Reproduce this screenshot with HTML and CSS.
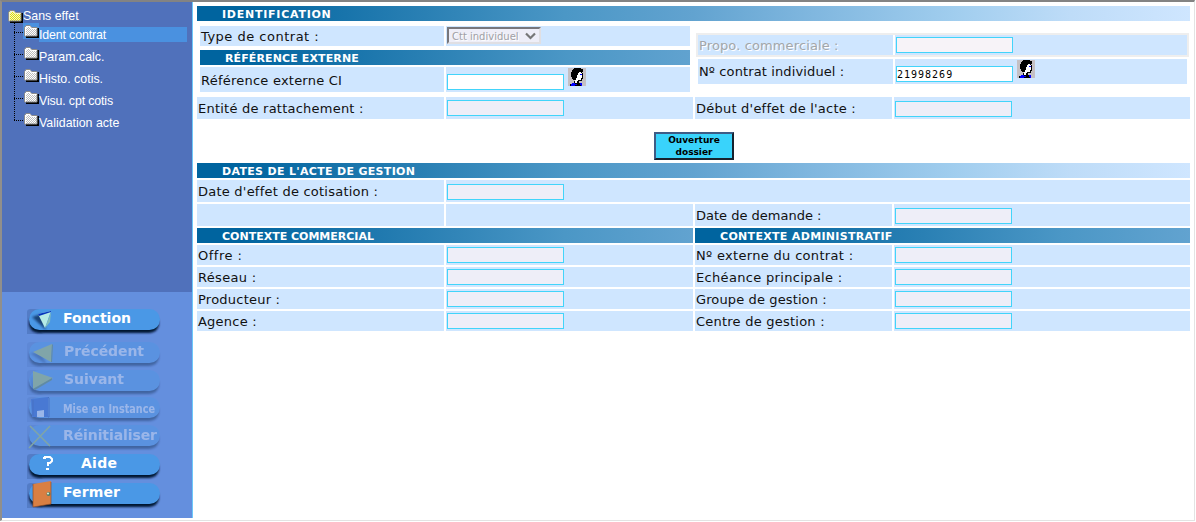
FILE: index.html
```html
<!DOCTYPE html>
<html lang="fr">
<head>
<meta charset="utf-8">
<title>Ident contrat</title>
<link rel="stylesheet" href="styles.css">
</head>
<body>
<svg class="defs" width="0" height="0">
  <defs>
    <pattern id="dots" width="2" height="2" patternUnits="userSpaceOnUse"><rect width="2" height="2" fill="#fff"/><rect width="1" height="1" fill="#bdbdbd"/><rect x="1" y="1" width="1" height="1" fill="#bdbdbd"/></pattern>
    <pattern id="ydots" width="2" height="2" patternUnits="userSpaceOnUse"><rect width="2" height="2" fill="#f2f2d0"/><rect width="1" height="1" fill="#e2e200"/><rect x="1" y="1" width="1" height="1" fill="#e2e200"/></pattern>
    <filter id="soft" x="-10%" y="-30%" width="120%" height="170%"><feGaussianBlur stdDeviation="1.3"/></filter>
    <symbol id="folder" viewBox="0 0 15 13"><path d="M2 12h12V3" fill="none" stroke="#000" stroke-width="2"/><path d="M.5 11V2.500L2 .5h4l1.500 2h5.500V11z" fill="url(#dots)" stroke="#8b8b8b"/><path d="M1.500 10.500V2.500h1l.5-1h3l1.500 2h5" fill="none" stroke="#fff"/></symbol>
    <symbol id="folder-open" viewBox="0 0 15 13"><path d="M2 12h12V3" fill="none" stroke="#000" stroke-width="2"/><path d="M.5 11V2.500L2 .5h4l1.500 2h5.500V11z" fill="url(#ydots)" stroke="#8b8b8b"/><path d="M1.500 10.500V2.500h1l.5-1h3l1.500 2h5" fill="none" stroke="#f4f4c8"/></symbol>
    <symbol id="pill" viewBox="0 0 136 28"><path d="M0 4Q0 1 4 1h10v22q0 3 4 3H0z" fill="#183a70" opacity=".22"/><rect x="2" y="6" width="130" height="19" rx="9.500" fill="#001433" filter="url(#soft)"/><rect x="2" y="1" width="131" height="21" rx="10.500" fill="#4a98e6"/></symbol>
    <symbol id="person" viewBox="0 0 18 18" shape-rendering="crispEdges"><path fill="#c4c0c4" d="M0 0h18v18H0z"/><path fill="#000" d="M6 0h7v1h2v3h-1v1h1v6h-1v2h-3v2h3v3H2v-2h2v-1h2v-2h1v-1H5v-1H4V9H3V4h1V2h1V1h1z"/><path fill="#fff" d="M11 4h2v1h1v5h-1v2h-3v1H9v2H7v-3h1v-2h1V7h1V5h1z"/><path fill="#00f" d="M3 16h1v-1h3v1h2v1H7v1H3zM12 15h2v3h-1v-1h-1zM12 6h2v1h-2z"/></symbol>
  </defs>
</svg>
<div class="frame">
  <nav class="side">
    <div class="tree">
      <div class="root"><svg width="15" height="13"><use href="#folder-open"/></svg><span class="t-root">Sans effet</span></div>
      <ul class="branch">
        <li class="on"><i></i><b><svg width="15" height="13"><use href="#folder"/></svg></b><span class="snug">Ident contrat</span></li>
        <li><i></i><b><svg width="15" height="13"><use href="#folder"/></svg></b><span>Param.calc.</span></li>
        <li><i></i><b><svg width="15" height="13"><use href="#folder"/></svg></b><span>Histo. cotis.</span></li>
        <li><i></i><b><svg width="15" height="13"><use href="#folder"/></svg></b><span class="snug">Visu. cpt cotis</span></li>
        <li><i></i><b><svg width="15" height="13"><use href="#folder"/></svg></b><span>Validation acte</span></li>
      </ul>
    </div>
    <div class="actions">
      <svg class="act a1" viewBox="0 0 136 28"><use href="#pill"/><path d="M5 9l14 13-5-16z" fill="#001840" opacity=".65" filter="url(#soft)"/><path d="M11 6l13-3-6 17z" fill="#b5ebe5"/><path d="M11 6l13-3v1L12 8z" fill="#0635bd"/><path d="M24 4l-1 10-5 6z" fill="#83beb9"/><text x="36" y="15" textLength="68">Fonction</text></svg>
      <svg class="act a2 off" viewBox="0 0 136 28"><use href="#pill"/><path d="M3 12l17 12-6-12z" fill="#001840" opacity=".6" filter="url(#soft)"/><path d="M6 11l19-8-1 18z" fill="#b4d04a"/><path d="M25 3l1 1-1 17h-1z" fill="#5e8535"/><text x="37" y="15" textLength="80">Précédent</text></svg>
      <svg class="act a3 off" viewBox="0 0 136 28"><use href="#pill"/><path d="M4 4l4 18-3 1z" fill="#001840" opacity=".6" filter="url(#soft)"/><path d="M6 2l20 7L6 20z" fill="#b4d04a"/><path d="M6 20l19-11v2L8 21z" fill="#5e8535"/><text x="37" y="15" textLength="60">Suivant</text></svg>
      <svg class="act a4 off" viewBox="0 0 136 28"><use href="#pill"/><path d="M4 3L21 1v20H5z" fill="#1a52bf"/><path d="M21 1l1 1v19h-1M6 4v16" fill="none" stroke="#123d94"/><path d="M10 15l7-1v7h-7z" fill="#fff"/><text x="36" y="17" font-size="12" textLength="92" lengthAdjust="spacingAndGlyphs">Mise en Instance</text></svg>
      <svg class="act a5 off" viewBox="0 0 136 28"><use href="#pill"/><path d="M3 2l20 20M23 2L2 24" fill="none" stroke="#b5cf3d" stroke-width="1.500"/><text x="36" y="16" textLength="94">Réinitialiser</text></svg>
      <svg class="act a6" viewBox="0 0 136 28"><use href="#pill"/><path d="M17 6V5h1V4h5l2 2v2l-2 2h-2v3" fill="none" stroke="#fff" stroke-width="2"/><path d="M19 15h3v2h-3z"/><text x="54" y="15" textLength="36">Aide</text></svg>
      <svg class="act a7" viewBox="0 0 136 28"><use href="#pill"/><path d="M6 2L24-1v23L6 25z" fill="#d97f43"/><path d="M6 2v23M6 25l18-3V0" fill="none" stroke="#8f4d29" stroke-width=".7"/><circle cx="21.500" cy="12" r="2" fill="#517d65"/><circle cx="21" cy="11.500" r="1" fill="#dff5df"/><text x="36" y="15" textLength="57">Fermer</text></svg>
    </div>
  </nav>
  <main class="main">
    <h2 class="bar ls-7">IDENTIFICATION</h2>
    <section class="ident">
      <div class="left">
        <div class="row two"><div class="lab ls-5">Type de contrat :</div><div class="fld"><div class="select"><span>Ctt individuel</span><svg width="11" height="8" viewBox="0 0 11 8"><path d="M1 1.500l4.500 4.500L10 1.500" fill="none" stroke="#777" stroke-width="2.200"/></svg></div></div></div>
        <h2 class="bar sub ls-1">RÉFÉRENCE EXTERNE</h2>
        <div class="row two tall"><div class="lab ls-2">Référence externe CI</div><div class="fld"><div class="inp live"></div><svg class="person" width="18" height="18"><use href="#person"/></svg></div></div>
      </div>
      <div class="right">
        <div class="disabled"><div class="row pair"><div class="lab dim ls-1">Propo. commerciale :</div><div class="fld"><div class="inp pink"></div></div></div></div>
        <div class="row pair tall"><div class="lab raised ls-1">Nº contrat individuel :</div><div class="fld"><div class="inp live">21998269</div><svg class="person" width="18" height="18"><use href="#person"/></svg></div></div>
      </div>
    </section>
    <div class="row four h22"><div class="lab ls-2">Entité de rattachement :</div><div class="fld mid"><div class="inp"></div></div><div class="lab ls-2">Début d'effet de l'acte :</div><div class="fld"><div class="inp"></div></div></div>
    <div class="openrow"><button class="open">Ouverture<br>dossier</button></div>
    <h2 class="bar ls-3">DATES DE L'ACTE DE GESTION</h2>
    <div class="row wide h22"><div class="lab ls-2">Date d'effet de cotisation :</div><div class="fld"><div class="inp"></div></div></div>
    <div class="row four h22"><div class="lab"></div><div class="fld"></div><div class="lab">Date de demande :</div><div class="fld"><div class="inp"></div></div></div>
    <div class="heads"><h2 class="bar">CONTEXTE COMMERCIAL</h2><h2 class="bar ls-3">CONTEXTE ADMINISTRATIF</h2></div>
    <div class="row four"><div class="lab ls-5">Offre :</div><div class="fld"><div class="inp"></div></div><div class="lab ls-3">Nº externe du contrat :</div><div class="fld"><div class="inp"></div></div></div>
    <div class="row four"><div class="lab ls-3">Réseau :</div><div class="fld"><div class="inp"></div></div><div class="lab ls-3">Echéance principale :</div><div class="fld"><div class="inp"></div></div></div>
    <div class="row four"><div class="lab ls-2">Producteur :</div><div class="fld"><div class="inp"></div></div><div class="lab ls-1">Groupe de gestion :</div><div class="fld"><div class="inp"></div></div></div>
    <div class="row four"><div class="lab ls-2">Agence :</div><div class="fld"><div class="inp"></div></div><div class="lab ls-2">Centre de gestion :</div><div class="fld"><div class="inp"></div></div></div>
  </main>
</div>
</body>
</html>
```
FILE: styles.css
```css
* { box-sizing: border-box; }
body { margin: 0; background: #fff; overflow: hidden; font-family: "DejaVu Sans", Verdana, sans-serif; }
.defs { display: block; height: 0; }
.frame {
  display: flex; width: 1195px; height: 521px;
  border-style: solid; border-width: 2px 1px 1px 2px; border-color: #838383 #e3e3e3 #e3e3e3 #918f8b;
}
.side { width: 191px; height: 516px; border-right: 1px solid #6cc8fa; display: flex; flex-direction: column; background: #648fde; }
.tree { height: 290px; background: #5071bb; padding: 6px 0 0 6px; color: #fff; font: 12.4px/15px "Liberation Sans", Arial, sans-serif; }
.root { display: flex; height: 15px; align-items: flex-end; }
.t-root { line-height: 14px; }
.tree svg { display: block; }
.branch { list-style: none; margin: 0 0 0 6px; padding: 0; }
.branch li { display: flex; height: 22px; align-items: flex-start; }
.branch i { width: 9px; height: 22px; background: repeating-linear-gradient(#000 0 1px, transparent 1px 2px) 0 0 / 1px 100% no-repeat, repeating-linear-gradient(90deg, #000 0 1px, transparent 1px 2px) 0 9px / 100% 1px no-repeat; }
.branch li:last-child i { height: 10px; }
.branch b { width: 16px; height: 16px; padding: 2px 0 0 1px; }
.branch span { width: 148px; height: 15px; margin-top: 4px; line-height: 17px; }
.branch .snug { letter-spacing: -.15px; }
.branch .on b, .branch .on span { background: #4a91e0; }
.actions { display: flex; flex-direction: column; padding: 16px 0 0 25px; }
.act { width: 136px; height: 28px; display: block; overflow: visible; flex: none; fill: #fff; font: bold 14px "DejaVu Sans", Verdana, sans-serif; }
.off { opacity: .35; }
.a2 { margin-top: 5px; }
.a4 { margin-top: -1px; }
.a6 { margin-top: 1px; }
.a7 { margin-top: 1px; }
.main { width: 993px; margin: 4px 0 0 4px; display: flex; flex-direction: column; gap: 2px; flex: none; }
.bar {
  margin: 0; height: 15px; padding-left: 25px; color: #fff; font-size: 11px; font-weight: bold; line-height: 17px; white-space: nowrap;
  background: linear-gradient(90deg, #00649f 0, #00649f 4%, #2a80b4 23%, #4b97c6 37%, #62a3d0 50%, #80b7df 62%, #a0cdee 76%, #bedcf8 88%, #cfe6ff 100%) 0 0 / 993px 100% no-repeat;
}
.ident { display: grid; grid-template-columns: 490px 493px; column-gap: 6px; padding-left: 3px; height: 72px; }
.left { padding-top: 3px; }
.left .sub { margin: 4px 0 2px; }
.right { padding-top: 10px; }
.disabled { border: 2px solid #eee; margin-bottom: 2px; }
.right > .row { margin: 0 2px; }
.row { display: grid; column-gap: 2px; height: 20px; }
.h22 { height: 22px; }
.tall { height: 25px; }
.two { grid-template-columns: 244px 244px; }
.pair { grid-template-columns: 195px 292px; }
.four { grid-template-columns: 247px 247px 197px 296px; }
.wide { grid-template-columns: 247px 744px; }
.heads { display: grid; grid-template-columns: 496px 495px; column-gap: 2px; }
.lab, .fld { background: #cfe6ff; display: flex; }
.lab { align-items: center; padding: 2px 0 0 1px; font-size: 13px; white-space: nowrap; color: #111; line-height: 16px; }
.raised { padding-top: 0; }
.ls-1 { letter-spacing: .12px; }
.ls-2 { letter-spacing: .23px; }
.ls-3 { letter-spacing: .32px; }
.ls-5 { letter-spacing: .5px; }
.ls-7 { letter-spacing: .75px; }
.dim { color: #a3a6aa; text-shadow: 1px 1px #fff; }
.fld { align-items: flex-end; padding: 0 0 2px 1px; }
.mid { padding-bottom: 3px; }
.inp { width: 117px; height: 16px; border: 1px solid #42d4fa; background: #eeeef8; }
.live { background: #fff; font: 10px/16px "DejaVu Sans Mono", monospace; letter-spacing: 1px; color: #000; }
.pink { background: #f7f3f8; }
.person { align-self: flex-start; margin: 1px 0 0 4px; }
.select { width: 94px; height: 17px; border: 2px solid #e0dfe3; border-color: #77777c #e0dfe3 #e0dfe3 #77777c; background: #eeeef8; display: flex; align-items: center; justify-content: space-between; padding: 0 3px; font-size: 10px; line-height: 13px; color: #a0a0a5; text-shadow: 1px 1px #fff; white-space: nowrap; }
.select span { padding-top: 2px; }
.openrow { height: 40px; padding: 11px 0 0 457px; }
.open { display: block; width: 80px; height: 28px; padding: 0; border: 2px solid; border-color: #3e5c86 #17222e #17222e #3e5c86; background: #39d3fb; color: #000; font: bold 9px/12px "DejaVu Sans", Verdana, sans-serif; }
```
